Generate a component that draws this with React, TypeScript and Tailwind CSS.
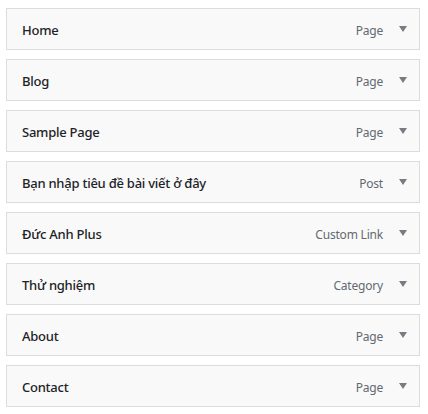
import React from "react";

const items: { title: string; type: string }[] = [
  { title: "Home", type: "Page" },
  { title: "Blog", type: "Page" },
  { title: "Sample Page", type: "Page" },
  { title: "Bạn nhập tiêu đề bài viết ở đây", type: "Post" },
  { title: "Đức Anh Plus", type: "Custom Link" },
  { title: "Thử nghiệm", type: "Category" },
  { title: "About", type: "Page" },
  { title: "Contact", type: "Page" },
];

export default function App() {
  return (
    <div className="w-[428px] h-[414px] bg-white pl-[6px] pt-[8px] font-['Noto_Sans',sans-serif]">
      <div className="flex flex-col gap-[9px] w-[414px]">
        {items.map((it) => (
          <div
            key={it.title}
            className="h-[42px] border border-[#dcdcde] bg-[#f9f9f9] flex items-center pl-[15px] pr-[12px]"
          >
            <span className="flex-1 text-[13px] leading-[20px] pt-[1px] text-[#1d2327] font-medium tracking-[-0.25px]">{it.title}</span>
            <span className="text-[12px] leading-[16px] pt-[3px] text-[#646970] tracking-[-0.2px]">{it.type}</span>
            <svg width="8" height="6" viewBox="0 0 8 6" className="ml-[16px]">
              <path d="M0 0H8L4 6Z" fill="#787c82" />
            </svg>
          </div>
        ))}
      </div>
    </div>
  );
}
